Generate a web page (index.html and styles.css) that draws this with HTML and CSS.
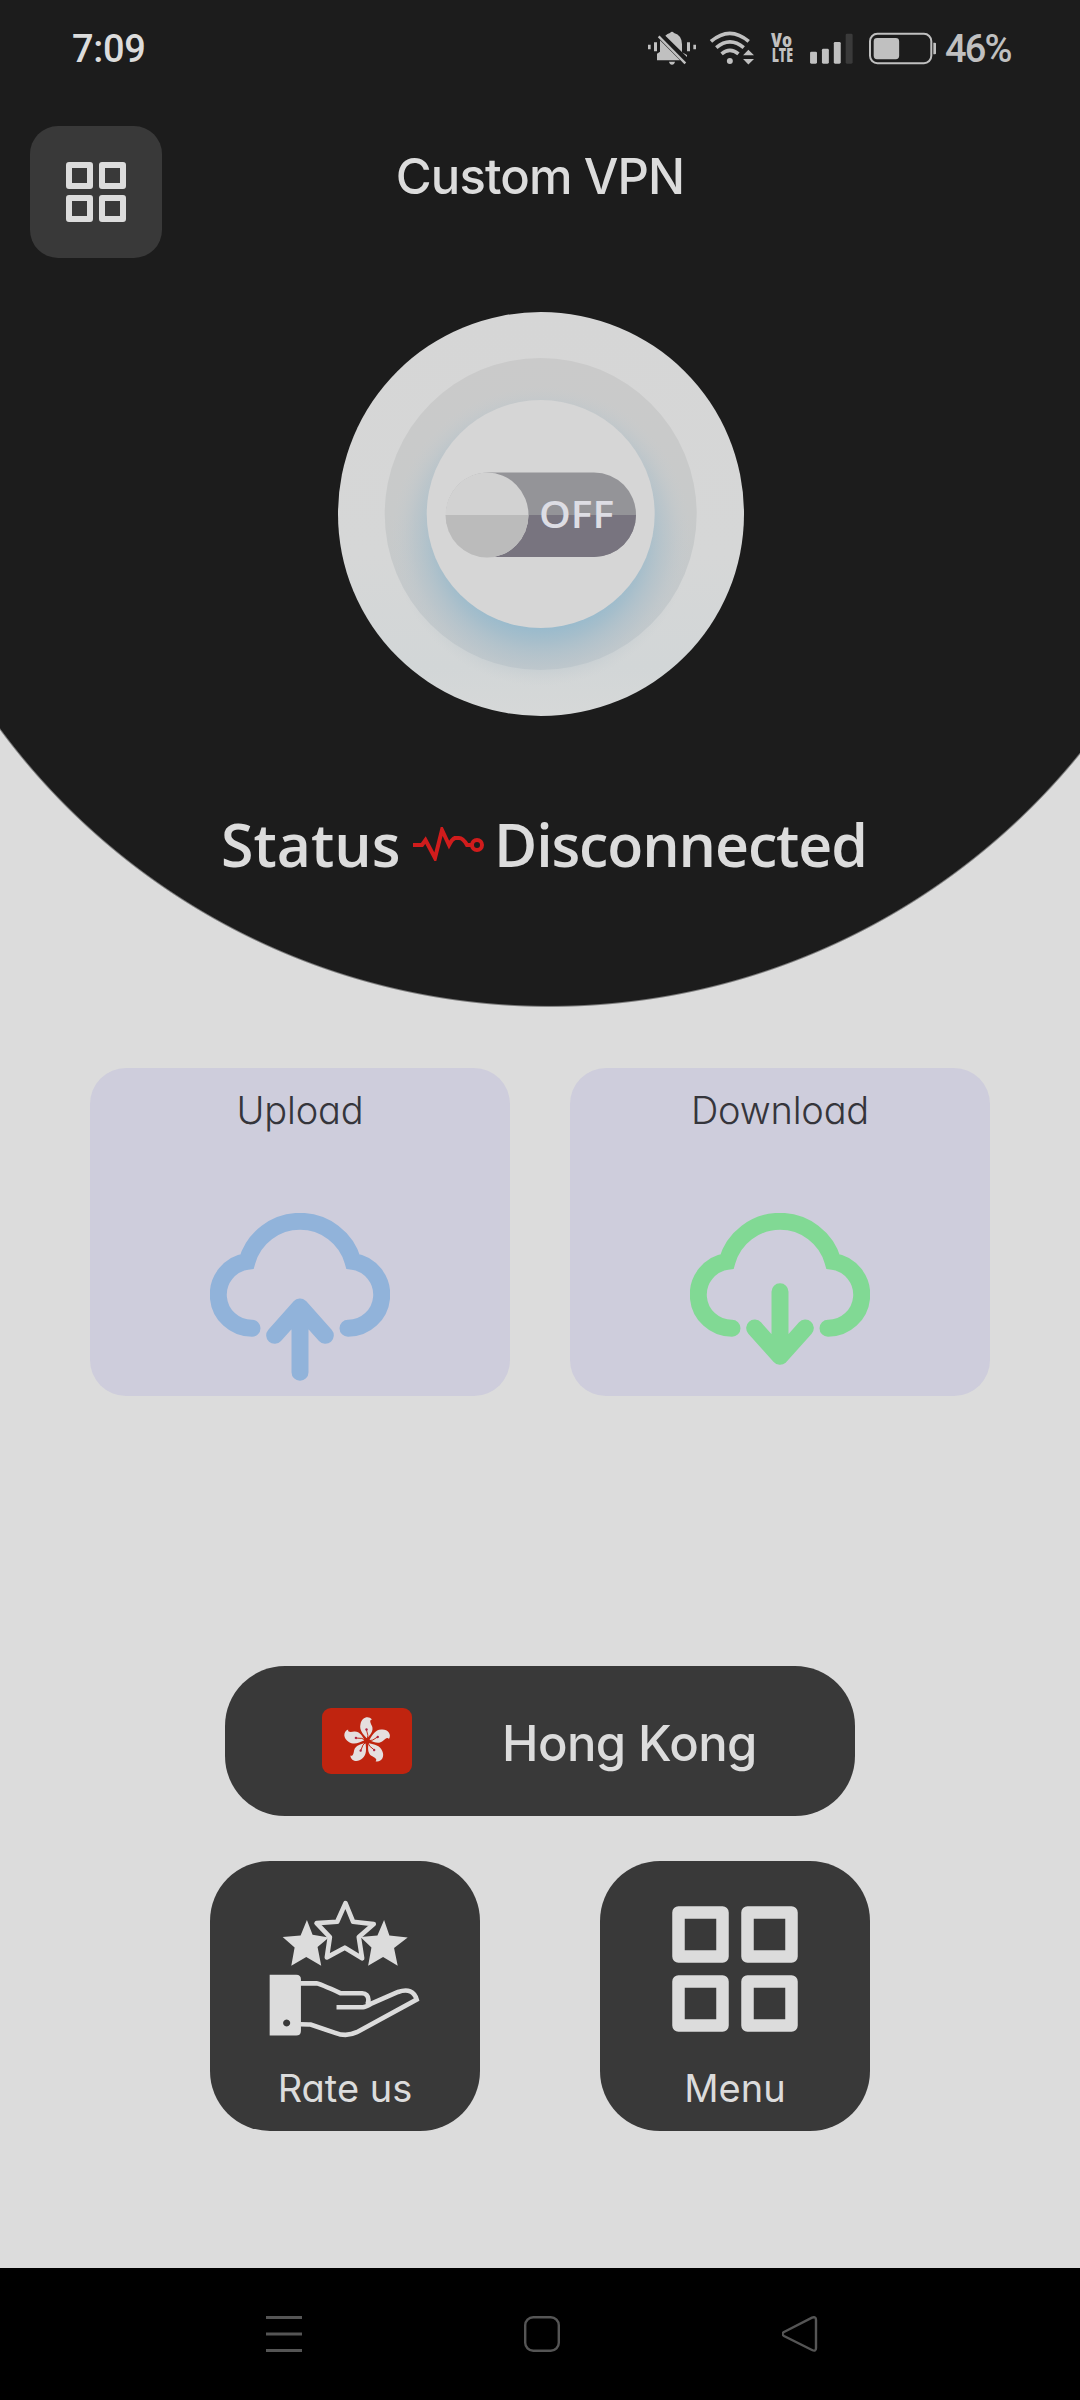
FILE: index.html
```html
<!DOCTYPE html>
<html lang="en">
<head>
<meta charset="utf-8">
<title>Custom VPN</title>
<link rel="stylesheet" href="styles.css">
</head>
<body>
<div class="phone">
  <header class="hero">
    <div class="statusbar">
      <span class="clock">7:09</span>
      <div class="indicators">
        <svg class="ind-bell" viewBox="84 92 144 102">
          <path d="M84 133h8v14h-8zM102 126h9v27h-9zM201 126h9v27h-9zM220 133h8v14h-8z"/>
          <path d="M111 180v-20l9-6v-34L180 180zM136 106q6-6 14-8q6-7 12 0q24 7 24 34v24l15 8v6zM147 184h18q-2 9-9 9t-9-9z"/>
          <path d="M116 108L196 189" class="slash"/>
        </svg>
        <svg class="ind-wifi" viewBox="268 92 136 102">
          <g class="waves">
            <path d="M274 123Q331 74 388 123"/>
            <path d="M290 142Q331 107 373 142"/>
            <path d="M306 161Q331 140 357 161"/>
          </g>
          <circle cx="331" cy="182" r="9"/>
          <path d="M371 165L387 148L404 165zM371 176H404L387 193z"/>
        </svg>
        <svg class="ind-volte" viewBox="453 96 67 96">
          <text x="453" y="141" textLength="64" lengthAdjust="spacingAndGlyphs">Vo</text>
          <text x="455" y="188" textLength="65" lengthAdjust="spacingAndGlyphs">LTE</text>
        </svg>
        <svg class="ind-signal" viewBox="570 96 130 94">
          <rect x="570" y="153" width="21" height="36" rx="4"/>
          <rect x="606" y="144" width="21" height="45" rx="4"/>
          <rect x="642" y="123" width="21" height="66" rx="4"/>
          <rect class="weak" x="678" y="98" width="21" height="91" rx="4"/>
        </svg>
        <svg class="ind-battery" viewBox="747 96 200 98">
          <rect class="shell" x="750" y="101" width="183" height="88" rx="22"/>
          <rect x="761" y="114" width="76" height="63" rx="10"/>
          <path d="M939 128h5q4 0 4 4v26q0 4-4 4h-5z"/>
        </svg>
        <span class="percent">46%</span>
      </div>
    </div>

    <div class="topbar">
      <button class="menu-button" aria-label="Menu">
        <svg viewBox="0 0 60 60"><path d="M3 3h21v21H3zM36 3h21v21H36zM3 36h21v21H3zM36 36h21v21H36z"/></svg>
      </button>
      <h1 class="title">Custom VPN</h1>
    </div>

    <svg class="power" viewBox="0 0 406 404">
      <defs>
        <linearGradient id="outer" x1="0" y1="0" x2="0" y2="1">
          <stop offset="0" stop-color="#d6d6d6"/><stop offset=".6" stop-color="#d6d7d7"/><stop offset=".88" stop-color="#d2d6d7"/><stop offset="1" stop-color="#d6d8d8"/>
        </linearGradient>
        <linearGradient id="ring" x1="0" y1="0" x2="0" y2="1">
          <stop offset="0" stop-color="#cacaca"/><stop offset=".5" stop-color="#c8caca"/><stop offset="1" stop-color="#c1c8cc"/>
        </linearGradient>
        <radialGradient id="glow" gradientUnits="userSpaceOnUse" cx="203" cy="224" r="150">
          <stop offset=".58" stop-color="#94b9cd"/><stop offset=".7" stop-color="#a3bdcb" stop-opacity=".9"/><stop offset=".85" stop-color="#b2c2cb" stop-opacity=".5"/><stop offset="1" stop-color="#c6cccf" stop-opacity="0"/>
        </radialGradient>
        <clipPath id="lower"><rect y="203" width="406" height="201"/></clipPath>
      </defs>
      <ellipse cx="203" cy="202" rx="203" ry="202" fill="url(#outer)"/>
      <circle cx="202.700" cy="202" r="156" fill="url(#ring)"/>
      <circle cx="203" cy="224" r="150" fill="url(#glow)"/>
      <circle cx="202.700" cy="202" r="114" fill="#d6d6d6"/>
      <rect x="108" y="160.500" width="190" height="84.500" rx="42" fill="#949498"/>
      <rect x="108" y="160.500" width="190" height="84.500" rx="42" fill="#78747f" clip-path="url(#lower)"/>
      <ellipse cx="149" cy="203" rx="41.500" ry="42.500" fill="#d2d2d2"/>
      <ellipse cx="149" cy="203" rx="41.500" ry="42.500" fill="#bbbbbb" clip-path="url(#lower)"/>
      <text class="switch-label" x="201" y="216" textLength="75" lengthAdjust="spacingAndGlyphs">OFF</text>
    </svg>

    <div class="connection">
      <span class="label">Status</span>
      <svg class="pulse" viewBox="0 0 71 34">
        <path d="M0 18h9l3.500-5L22 31L29 3l7 15q3-6 6-7h4q4 0 8 7h4"/>
        <circle cx="64" cy="18" r="5"/>
      </svg>
      <span class="state">Disconnected</span>
    </div>
  </header>

  <main class="content">
    <section class="traffic">
      <article class="card">
        <h2>Upload</h2>
        <svg class="cloud up" viewBox="420 490 540 504">
          <path d="M546 836A101 101 0 0 1 531 635.100A165.300 165.300 0 0 1 849 635.100A101 101 0 0 1 834 836"/>
          <path class="arrow" d="M690 968V774M614 857L690 772L766 857"/>
        </svg>
      </article>
      <article class="card">
        <h2>Download</h2>
        <svg class="cloud down" viewBox="420 490 540 504">
          <path d="M546 836A101 101 0 0 1 531 635.100A165.300 165.300 0 0 1 849 635.100A101 101 0 0 1 834 836"/>
          <path class="arrow" d="M690 726V918M614 835L690 920L766 835"/>
        </svg>
      </article>
    </section>

    <button class="location">
      <svg class="flag" viewBox="0 0 90 66">
        <defs>
          <g id="petal">
            <path class="leaf" d="M-.500 -3C-4 -7 -8 -11 -6.500 -17C-5.500 -23 1 -26 5 -21.500C2 -21 3.500 -18 5 -15C7 -10 3 -6 .500 -3Z"/>
            <path class="stamen" d="M0 0Q2-6-.500-11"/>
            <circle class="anther" cx="-.5" cy="-11.500" r="1.200"/>
          </g>
        </defs>
        <rect width="90" height="66" rx="9"/>
        <g transform="translate(45 33)">
          <use href="#petal"/>
          <use href="#petal" transform="rotate(72)"/>
          <use href="#petal" transform="rotate(144)"/>
          <use href="#petal" transform="rotate(216)"/>
          <use href="#petal" transform="rotate(288)"/>
        </g>
      </svg>
      <span class="place">Hong Kong</span>
    </button>

    <div class="actions">
      <button class="tile">
        <svg class="rate-icon" viewBox="208 150 454 414">
          <path class="solid" d="M322 210L339 254L388 262L354 291L365 347L320 321L275 347L285 292L249 261L303 256zM554 210L570 256L625 262L584 294L595 347L551 321L506 347L516 292L483 261L534 256z"/>
          <path class="star" d="M438 159L461 215L523 222L478 261L488 325L436 293L382 322L391 261L351 219L413 215z"/>
          <path class="solid" fill-rule="evenodd" d="M210 374H290Q304 374 304 388V543Q304 557 290 557H210zM261 509a10.500 10.500 0 1 0 .1 0z"/>
          <path class="line" d="M302 400H351Q359 401 424 430H488Q506 431 507 450Q506 460 503 464M411 472H490Q498 471 514 462L596 426Q641 411 652 449L472 547Q441 562 407 549L333 524Q324 523 302 523"/>
        </svg>
        <span class="rate-label">Rate us</span>
      </button>
      <button class="tile">
        <svg class="grid-icon" viewBox="0 0 126 126"><path d="M6.500 6.500h44v44h-44zM75.500 6.500h44v44h-44zM6.500 75.500h44v44h-44zM75.500 75.500h44v44h-44z"/></svg>
        <span class="menu-label">Menu</span>
      </button>
    </div>
  </main>

  <nav class="navbar">
    <svg viewBox="0 0 36 36"><path class="bars" d="M0 1.500h36M0 18h36M0 34.500h36"/></svg>
    <svg viewBox="0 0 36 36"><rect x="1.200" y="1.200" width="33.600" height="33.600" rx="8"/></svg>
    <svg viewBox="0 0 36 36"><path d="M2 16L30 1.700Q34 0 34 4V32Q34 36 30 34L2 20Q-1 18 2 16z"/></svg>
  </nav>
</div>
</body>
</html>
```

FILE: styles.css
```css
* { box-sizing: border-box; margin: 0; }

body { background: #dcdcdc; font-family: Inter, "Open Sans", sans-serif; color: #dcdcdc; }

svg { display: block; flex: none; }

button { border: 0; padding: 0; font: inherit; color: inherit; }

.phone { width: 1080px; height: 2400px; display: flex; flex-direction: column; overflow: hidden; }

.hero {
  height: 1068px;
  display: flex;
  flex-direction: column;
  background: radial-gradient(circle at 549.4px 323.4px, #1c1c1c 682px, #dcdcdc 684px);
}

/* status bar */
.statusbar { height: 96px; padding: 0 67px 0 72px; display: flex; justify-content: space-between; align-items: center; }
.clock { font: 500 38px/1 Roboto, sans-serif; letter-spacing: -.3px; padding-top: 2px; }
.indicators { display: flex; align-items: center; color: #c0c0c0; fill: #c0c0c0; }
.ind-bell { width: 48px; height: 34px; }
.slash { stroke: #c0c0c0; stroke-width: 7; }
.ind-wifi { width: 45px; height: 34px; margin-left: 13px; }
.waves { fill: none; stroke: #c0c0c0; stroke-width: 11; }
.ind-volte { width: 22px; height: 32px; margin-left: 17px; overflow: visible; font: 800 59px "Open Sans", sans-serif; }
.ind-signal { width: 43px; height: 31px; margin-left: 17px; }
.weak { fill: #3a3a3a; }
.ind-battery { width: 67px; height: 33px; margin-left: 16px; }
.shell { fill: none; stroke: #c0c0c0; stroke-width: 6; }
.percent { width: 68px; margin-left: 9px; padding-top: 2px; font: 500 38px/1 Roboto, sans-serif; letter-spacing: -1.8px; white-space: nowrap; }

/* title row */
.topbar { margin-top: 30px; height: 132px; padding: 0 30px; display: grid; grid-template-columns: 132px 1fr 132px; }
.menu-button { height: 132px; border-radius: 28px; background: #393939; display: grid; place-items: center; }
.menu-button svg { width: 60px; height: 60px; fill: none; stroke: #dcdcdc; stroke-width: 6; stroke-linejoin: round; }
.title { text-align: center; font-size: 49px; line-height: 60px; padding-top: 21px; font-weight: 450; letter-spacing: -.9px; }

.power { width: 406px; height: 404px; margin: 54px 0 0 338px; }
.switch-label { font: 600 38px "Open Sans", sans-serif; fill: #dddde4; }

.connection { margin: 88px 0 0 221px; height: 80px; display: flex; align-items: center; font: 600 59px/80px "Open Sans", sans-serif; }
.label { width: 178px; }
.state { margin-left: 10px; letter-spacing: -1.1px; }
.pulse { width: 71px; height: 34px; margin-left: 14px; fill: none; stroke: #d01c1c; stroke-width: 4; }

/* traffic cards */
.content { height: 1200px; display: flex; flex-direction: column; align-items: center; }
.traffic { display: flex; gap: 60px; }
.card { width: 420px; height: 328px; border-radius: 36px; background: #cecddc; display: flex; flex-direction: column; align-items: center; }
.card h2 { margin-top: 18px; color: #35353b; font-size: 38px; line-height: 48px; font-weight: 300; letter-spacing: -.2px; font-feature-settings: "cv11"; }
.cloud { width: 180px; height: 168px; margin-top: 79px; fill: none; stroke-width: 51; stroke-linecap: round; }
.arrow { stroke-linejoin: round; }
.up { stroke: #91b3da; }
.down { stroke: #81d994; }

/* location */
.location { margin-top: 270px; width: 630px; height: 150px; padding-left: 97px; border-radius: 60px; background: #393939; display: flex; align-items: center; gap: 90px; }
.place { font-size: 49px; font-weight: 450; letter-spacing: -.6px; padding-top: 4px; }
.flag { width: 90px; height: 66px; fill: #c0240f; }
.leaf { fill: #e5dfdf; }
.stamen { fill: none; stroke: #c0240f; stroke-width: .9; }
.anther { fill: #b02040; }

/* tiles */
.actions { margin-top: 45px; display: flex; gap: 120px; }
.tile { width: 270px; height: 270px; border-radius: 60px; background: #393939; display: flex; flex-direction: column; align-items: center; font-size: 38px; line-height: 48px; font-feature-settings: "cv11"; }
.rate-icon { width: 151px; height: 138px; margin: 39px 1px 0 0; }
.solid { fill: #dcdcdc; }
.star { fill: #393939; stroke: #dcdcdc; stroke-width: 14; stroke-linejoin: round; }
.line { fill: none; stroke: #dcdcdc; stroke-width: 14; }
.grid-icon { width: 126px; height: 126px; margin-top: 45px; fill: none; stroke: #dcdcdc; stroke-width: 12.5; stroke-linejoin: round; }
.rate-label { margin-top: 26px; }
.menu-label { margin-top: 32px; }

/* system navigation */
.navbar { height: 132px; padding: 0 262px 0 266px; background: #000; display: flex; justify-content: space-between; align-items: center; }
.navbar svg { width: 36px; height: 36px; fill: none; stroke: #555; stroke-width: 2.4; }
.bars { stroke-width: 3; }
```
